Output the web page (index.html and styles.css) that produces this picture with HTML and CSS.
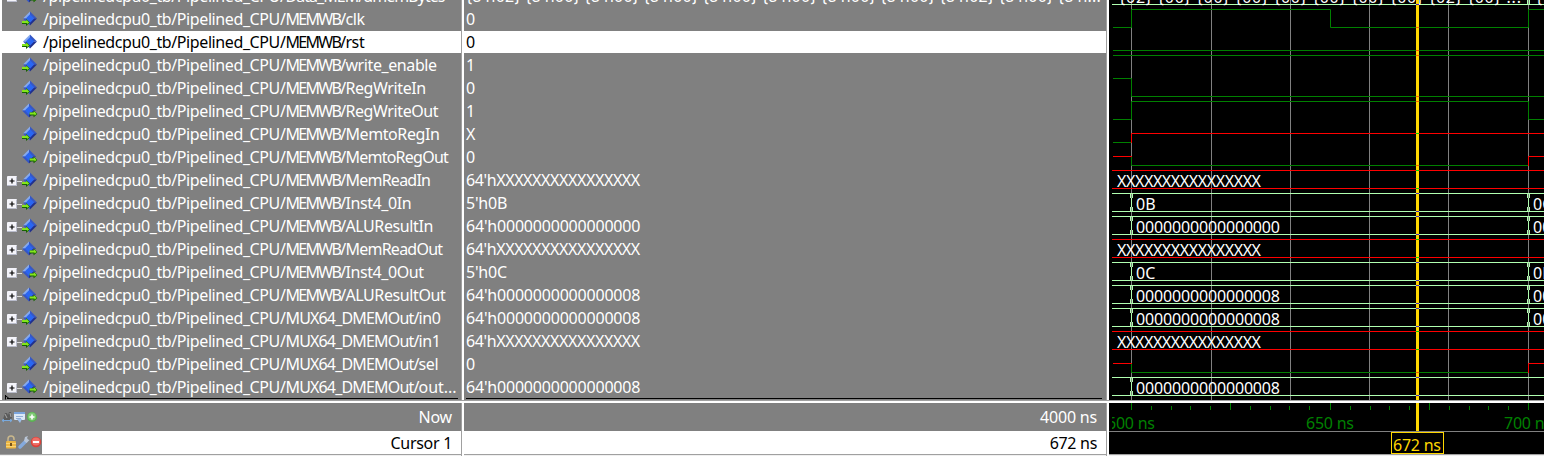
FILE: index.html
```html
<!DOCTYPE html>
<html lang="en">
<head>
<meta charset="utf-8">
<title>Wave</title>
<link rel="stylesheet" href="styles.css">
</head>
<body>
<svg class="defs" width="0" height="0">
  <defs>
    <symbol id="gem" viewBox="0 0 15 15">
      <path d="M7.5 0L0 7.5h7.500z" fill="#86a9ee"/>
      <path d="M7.500 0L15 7.500H7.500z" fill="#3657c4"/>
      <path d="M0 7.500L7.500 15V7.500z" fill="#3455c5"/>
      <path d="M15 7.500L7.500 15V7.500z" fill="#20308e"/>
      <path d="M7.500 3L12 7.500 7.500 12 3 7.500z" fill="#2a66f2"/>
    </symbol>
    <symbol id="arrow" viewBox="0 0 8 7">
      <path d="M0 2h4V0l4 3.500L4 7V5H0z" fill="#176400"/>
      <path d="M0 2h4.300V.6L7.200 3.400 5 5V4H0z" fill="#84e51c"/>
    </symbol>
    <symbol id="in" viewBox="0 0 16 16"><use href="#gem" x="1" y="0" width="14" height="15"/><use href="#arrow" x="0" y="8" width="8" height="7"/></symbol>
    <symbol id="out" viewBox="0 0 16 16"><use href="#gem" x="0" y="0" width="14" height="15"/><use href="#arrow" x="7.500" y="7.500" width="8" height="7"/></symbol>
    <symbol id="plus" viewBox="0 0 15 10"><path d="M10 5.500h5" stroke="#d8d8d8"/><rect width="10" height="10" rx="1" fill="#f4f4fa"/><path d="M0 9.500h10M9.500 1v8" stroke="#b9bccb"/><path d="M2.500 5h5M5 2.500v5" stroke="#000" stroke-width="1.200"/></symbol>
    <g id="edge"><path d="M0 0v19" stroke="#b0ffb0"/><path d="M-1 0v5M1 0v5M-1 14v5M1 14v5" stroke="#b0ffb0"/><path d="M0 1v4M0 14v4" stroke="#808080"/></g>
  </defs>
</svg>
<main class="window">
  <section class="top">
    <div class="names">
      <div class="row"><svg class="plus"><use href="#plus"/></svg><svg class="icon"><use href="#out"/></svg><span class="path">/pipelinedcpu0_tb/Pipelined_CPU/</span><span class="data">Data_MEM/dmemBytes</span></div>
      <div class="row"><i class="plus"></i><svg class="icon"><use href="#in"/></svg><span class="path">/pipelinedcpu0_tb/Pipelined_CPU/</span><span class="reg">MEMWB/</span><span>clk</span></div>
      <div class="row selected"><i class="plus"></i><svg class="icon"><use href="#in"/></svg><span class="path">/pipelinedcpu0_tb/Pipelined_CPU/</span><span class="reg">MEMWB/</span><span>rst</span></div>
      <div class="row"><i class="plus"></i><svg class="icon"><use href="#in"/></svg><span class="path">/pipelinedcpu0_tb/Pipelined_CPU/</span><span class="reg">MEMWB/</span><span>write_enable</span></div>
      <div class="row"><i class="plus"></i><svg class="icon"><use href="#in"/></svg><span class="path">/pipelinedcpu0_tb/Pipelined_CPU/</span><span class="reg">MEMWB/</span><span>RegWriteIn</span></div>
      <div class="row"><i class="plus"></i><svg class="icon"><use href="#out"/></svg><span class="path">/pipelinedcpu0_tb/Pipelined_CPU/</span><span class="reg">MEMWB/</span><span>RegWriteOut</span></div>
      <div class="row"><i class="plus"></i><svg class="icon"><use href="#in"/></svg><span class="path">/pipelinedcpu0_tb/Pipelined_CPU/</span><span class="reg">MEMWB/</span><span>MemtoRegIn</span></div>
      <div class="row"><i class="plus"></i><svg class="icon"><use href="#out"/></svg><span class="path">/pipelinedcpu0_tb/Pipelined_CPU/</span><span class="reg">MEMWB/</span><span class="mem">MemtoRegOut</span></div>
      <div class="row"><svg class="plus"><use href="#plus"/></svg><svg class="icon"><use href="#in"/></svg><span class="path">/pipelinedcpu0_tb/Pipelined_CPU/</span><span class="reg">MEMWB/</span><span class="mem">MemReadIn</span></div>
      <div class="row"><svg class="plus"><use href="#plus"/></svg><svg class="icon"><use href="#in"/></svg><span class="path">/pipelinedcpu0_tb/Pipelined_CPU/</span><span class="reg">MEMWB/</span><span>Inst4_0In</span></div>
      <div class="row"><svg class="plus"><use href="#plus"/></svg><svg class="icon"><use href="#in"/></svg><span class="path">/pipelinedcpu0_tb/Pipelined_CPU/</span><span class="reg">MEMWB/</span><span>ALUResultIn</span></div>
      <div class="row"><svg class="plus"><use href="#plus"/></svg><svg class="icon"><use href="#out"/></svg><span class="path">/pipelinedcpu0_tb/Pipelined_CPU/</span><span class="reg">MEMWB/</span><span class="mem">MemReadOut</span></div>
      <div class="row"><svg class="plus"><use href="#plus"/></svg><svg class="icon"><use href="#out"/></svg><span class="path">/pipelinedcpu0_tb/Pipelined_CPU/</span><span class="reg">MEMWB/</span><span>Inst4_0Out</span></div>
      <div class="row"><svg class="plus"><use href="#plus"/></svg><svg class="icon"><use href="#out"/></svg><span class="path">/pipelinedcpu0_tb/Pipelined_CPU/</span><span class="reg">MEMWB/</span><span>ALUResultOut</span></div>
      <div class="row"><svg class="plus"><use href="#plus"/></svg><svg class="icon"><use href="#in"/></svg><span class="path">/pipelinedcpu0_tb/Pipelined_CPU/</span><span class="mux">MUX64_DMEMOut/</span><span>in0</span></div>
      <div class="row"><svg class="plus"><use href="#plus"/></svg><svg class="icon"><use href="#in"/></svg><span class="path">/pipelinedcpu0_tb/Pipelined_CPU/</span><span class="mux">MUX64_DMEMOut/</span><span>in1</span></div>
      <div class="row"><i class="plus"></i><svg class="icon"><use href="#in"/></svg><span class="path">/pipelinedcpu0_tb/Pipelined_CPU/</span><span class="mux">MUX64_DMEMOut/</span><span>sel</span></div>
      <div class="row"><svg class="plus"><use href="#plus"/></svg><svg class="icon"><use href="#out"/></svg><span class="path">/pipelinedcpu0_tb/Pipelined_CPU/</span><span class="mux">MUX64_DMEMOut/</span><span class="cut">out...</span></div>
      <svg class="endmark" width="456" height="5"><path d="M.5 0v4.500M1 1l3 2.500" stroke="#000" fill="none"/><path d="M2 3.500h451" stroke="#000"/></svg>
    </div>
    <div class="values">
      <div class="row bytes">{8'h02} {8'h00} {8'h00} {8'h00} {8'h00} {8'h00} {8'h00} {8'h00} {8'h02} {8'h00} {8'h...</div>
      <div class="row">0</div>
      <div class="row selected">0</div>
      <div class="row">1</div>
      <div class="row">0</div>
      <div class="row">1</div>
      <div class="row">X</div>
      <div class="row">0</div>
      <div class="row xs">64'hXXXXXXXXXXXXXXXX</div>
      <div class="row">5'h0B</div>
      <div class="row">64'h0000000000000000</div>
      <div class="row xs">64'hXXXXXXXXXXXXXXXX</div>
      <div class="row">5'h0C</div>
      <div class="row">64'h0000000000000008</div>
      <div class="row">64'h0000000000000008</div>
      <div class="row xs">64'hXXXXXXXXXXXXXXXX</div>
      <div class="row">0</div>
      <div class="row">64'h0000000000000008</div>
      <div class="endline"></div>
    </div>
    <svg class="waves" viewBox="1109 0 435 400" width="435" height="400">
      <path class="grid" d="M1131.500 0v400M1211.500 0v400M1290.500 0v400M1369.500 0v400M1448.500 0v400M1528.500 0v400"/>
      <g class="low">
        <path d="M1113 27.500h18.500v-18H1330.500v18H1528.500v-18H1544"/>
        <path d="M1113 50.500H1544M1113 55.500H1544"/>
        <path d="M1113 78.500h18.500v18H1544"/>
        <path d="M1113 119.500h18.500v-18H1528.500v18H1544"/>
        <path d="M1113 142.500h18"/>
        <path d="M1131.500 156v9.500H1528"/>
        <path d="M1131.500 364v8.500H1528"/>
      </g>
      <g class="unknown">
        <path d="M1131.500 143v-9.500H1544"/>
        <path d="M1113 156.500h19M1528.500 166v-9.500H1544"/>
        <path d="M1113 363.500h19M1528.500 373v-9.500H1544"/>
        <path d="M1112 170.500H1544M1112 188.500H1544M1112 239.500H1544M1112 257.500H1544M1112 331.500H1544M1112 349.500H1544"/>
      </g>
      <g class="bus">
        <path d="M1112 4.500H1544M1112 193.500H1544M1112 211.500H1544M1112 216.500H1544M1112 234.500H1544M1112 262.500H1544M1112 280.500H1544M1112 285.500H1544M1112 303.500H1544M1112 308.500H1544M1112 326.500H1544M1112 377.500H1544M1112 395.500H1544"/>
      </g>
      <use href="#edge" x="1131.500" y="193"/><use href="#edge" x="1131.500" y="216"/><use href="#edge" x="1131.500" y="262"/><use href="#edge" x="1131.500" y="285"/><use href="#edge" x="1131.500" y="308"/><use href="#edge" x="1131.500" y="377"/>
      <use href="#edge" x="1528.500" y="-14"/><use href="#edge" x="1528.500" y="193"/><use href="#edge" x="1528.500" y="216"/><use href="#edge" x="1528.500" y="262"/><use href="#edge" x="1528.500" y="285"/><use href="#edge" x="1528.500" y="308"/>
      <g class="label">
        <text x="1119" y="3" textLength="402">{02} {00} {00} {00} {00} {00} {00} {00} {02} {00} ...</text>
        <text x="1536" y="3">{18}</text>
        <text x="1117" y="187" textLength="144">XXXXXXXXXXXXXXXX</text>
        <text x="1136" y="210">0B</text><text x="1533" y="210">0C</text>
        <text x="1136" y="233" textLength="144">0000000000000000</text><text x="1533" y="233">00</text>
        <text x="1117" y="256" textLength="144">XXXXXXXXXXXXXXXX</text>
        <text x="1136" y="279">0C</text><text x="1533" y="279">0B</text>
        <text x="1136" y="302" textLength="144">0000000000000008</text><text x="1533" y="302">00</text>
        <text x="1136" y="325" textLength="144">0000000000000008</text><text x="1533" y="325">00</text>
        <text x="1117" y="348" textLength="144">XXXXXXXXXXXXXXXX</text>
        <text x="1136" y="394" textLength="144">0000000000000008</text>
      </g>
      <path class="cursor" d="M1417.500 0v400"/>
      <path stroke="#ff5700" d="M1416 27.500h3M1416 50.500h3M1416 55.500h3M1416 96.500h3M1416 101.500h3M1416 165.500h3M1416 372.500h3"/>
      <path stroke="#00d700" d="M1416 133.500h3M1416 170.500h3M1416 188.500h3M1416 239.500h3M1416 257.500h3M1416 331.500h3M1416 349.500h3"/>
      <path stroke="#4f28b0" d="M1416 4.500h3M1416 193.500h3M1416 211.500h3M1416 216.500h3M1416 234.500h3M1416 262.500h3M1416 280.500h3M1416 285.500h3M1416 303.500h3M1416 308.500h3M1416 326.500h3M1416 377.500h3M1416 395.500h3"/>
    </svg>
  </section>
  <section class="bottom">
    <div class="foot-names">
      <div class="now">
        <svg width="36" height="14" viewBox="0 0 36 14">
          <path d="M1 9l2-6h2l1 2 1-3h2l1 6-2 2H2z" fill="#5c5c5c"/><path d="M3 4l2 4M8 3l1 4" stroke="#a8a8a8"/><path d="M0 10.500h10M2 9l-2 1.500L2 12M8 9l2 1.500L8 12" stroke="#79a9dc" fill="none"/>
          <rect x="12" y="2" width="11" height="8" rx="1" fill="#dce8f6"/><rect x="12" y="2" width="11" height="2" fill="#7ba5de"/><path d="M14 6.500h7M14 8.500h5" stroke="#92aed4"/><path d="M15 9h5l-2 4z" fill="#9ec0ec"/>
          <circle cx="30" cy="7" r="5" fill="#58b350"/><circle cx="30" cy="6.500" r="3.900" fill="#80ca76"/><path d="M27.500 7h5M30 4.500v5" stroke="#fff" stroke-width="1.600"/>
        </svg>
        <span>Now</span>
      </div>
      <div class="cur">
        <svg width="42" height="23" viewBox="0 0 42 23">
          <path d="M8 11V8q0-3 3-3t3 3v1" stroke="#c9b78c" fill="none" stroke-width="1.500"/><rect x="6" y="10" width="10" height="7.500" rx="1" fill="#edb642"/><path d="M6 12.500h10M6 15.500h10" stroke="#f9d474"/><rect x="10" y="12" width="2" height="3" fill="#76531a"/>
          <path d="M20 16l6-6" stroke="#84a9dc" stroke-width="3.500" stroke-linecap="round"/><path class="steel" d="M24 10l2.500 2 3-3-1.500-.5-1-1.500 1-2-3 1z"/>
          <circle cx="36" cy="11" r="5.200" fill="#dc4038"/><circle cx="36" cy="10.500" r="4" fill="#ee7068"/><path d="M33 11h6" stroke="#fff" stroke-width="2"/>
        </svg>
        <span>Cursor 1</span>
      </div>
    </div>
    <div class="foot-values"><div class="now">4000 ns</div><div class="cur"><span>672 ns</span></div></div>
    <svg class="ruler" viewBox="1109 403 435 51" width="435" height="51">
      <path class="low" d="M1131.500 403v7M1230.500 403v7M1330.500 403v7M1429.500 403v7M1528.500 403v7M1151.500 406v4M1171.500 406v4M1190.500 406v4M1210.500 406v4M1250.500 406v4M1270.500 406v4M1289.500 406v4M1309.500 406v4M1350.500 406v4M1370.500 406v4M1389.500 406v4M1409.500 406v4M1449.500 406v4M1469.500 406v4M1488.500 406v4M1508.500 406v4"/>
      <g class="time"><text x="1107" y="429" textLength="48">600 ns</text><text x="1306" y="429" textLength="48">650 ns</text><text x="1504" y="429" textLength="48">700 ns</text></g>
      <rect fill="#000" x="1109" y="411" width="3" height="20"/>
      <path class="grid" d="M1109 431.500H1544"/>
      <path class="cursor" d="M1417.500 403v28"/>
      <rect x="1391.500" y="432.500" width="52" height="21" fill="#000" stroke="#ffd700"/>
      <text class="time-cursor" x="1393" y="451" textLength="48">672 ns</text>
    </svg>
  </section>
</main>
</body>
</html>
```
FILE: styles.css
```css
* { box-sizing: border-box; }
body {
  margin: 0;
  font: 16px/23px "Noto Sans", sans-serif;
  color: #fff;
  background: #f0f0f0;
}
.defs { display: block; width: 0; height: 0; }
.window { width: 1544px; height: 456px; overflow: hidden; background: #f0f0f0; }
.top, .bottom {
  display: grid;
  grid-template-columns: 461px 642px 435px;
  column-gap: 3px;
  background: linear-gradient(90deg, transparent 461px, #a0a0a0 461px 462px, #fff 462px 464px, transparent 464px 1106px, #a0a0a0 1106px 1107px, #fff 1107px 1109px, transparent 1109px);
}
.top { height: 400px; }
.bottom { height: 56px; border-top: 1px solid #a0a0a0; box-shadow: inset 0 2px #fff; padding-top: 2px; }
.names, .values { height: 400px; overflow: hidden; background: #808080; position: relative; }
.names { border-left: 2px solid #fff; }
.names .row, .values .row { height: 23px; white-space: pre; overflow: hidden; }
.row:first-child { margin-top: -15px; }
.row { border-bottom: 1px solid #808080; line-height: 23px; }
.selected { background: #fff; color: #000; }
.names .row { display: flex; padding-left: 5px; }
.plus { width: 15px; height: 10px; margin-top: 7px; flex: none; }
.icon { width: 16px; height: 16px; margin-top: 3px; flex: none; }
.names span { letter-spacing: -0.4px; }
.names .path { margin-left: 5px; letter-spacing: -0.4px; }
.names .reg { letter-spacing: -1.7px; margin-right: 1px; }
.names .mux { letter-spacing: -0.83px; }
.names .data { letter-spacing: -0.95px; }
.names .mem { letter-spacing: -0.75px; }
.names .cut { letter-spacing: -0.05px; }
.values .row { padding-left: 2px; letter-spacing: -0.2px; }
.values .xs { letter-spacing: -0.4px; }
.values .bytes { letter-spacing: 0.24px; }
.endmark { position: absolute; left: 3px; top: 395px; }
.endline { position: absolute; left: 2px; right: 4px; top: 398px; height: 1px; background: #000; }
.waves, .ruler { display: block; background: #000; }
.waves path, .ruler path { fill: none; }
.grid { stroke: #808080; }
.low { stroke: #008000; fill: none; }
.unknown { stroke: #f00; fill: none; }
.bus { stroke: #b0ffb0; }
.cursor { stroke: #ffd700; stroke-width: 3; }
.label { fill: #fff; }
.time { fill: #008000; }
.time-cursor { fill: #ffd700; }
.foot-names, .foot-values, .ruler { height: 51px; }
.bottom > * { box-shadow: 0 1px #a0a0a0; }
.now { height: 28px; background: #808080; display: flex; justify-content: flex-end; padding: 3px 9px 0 2px; letter-spacing: -0.2px; }
.cur { height: 23px; background: #fff; color: #000; display: flex; justify-content: flex-end; padding-right: 9px; letter-spacing: -0.3px; }
.cur span { padding-top: 1px; }
.foot-names .now, .foot-names .cur { justify-content: space-between; }
.foot-names .now svg { margin-top: 4px; }
.cur svg { background: #808080; }
.steel { fill: #b9c5d6; }
```
